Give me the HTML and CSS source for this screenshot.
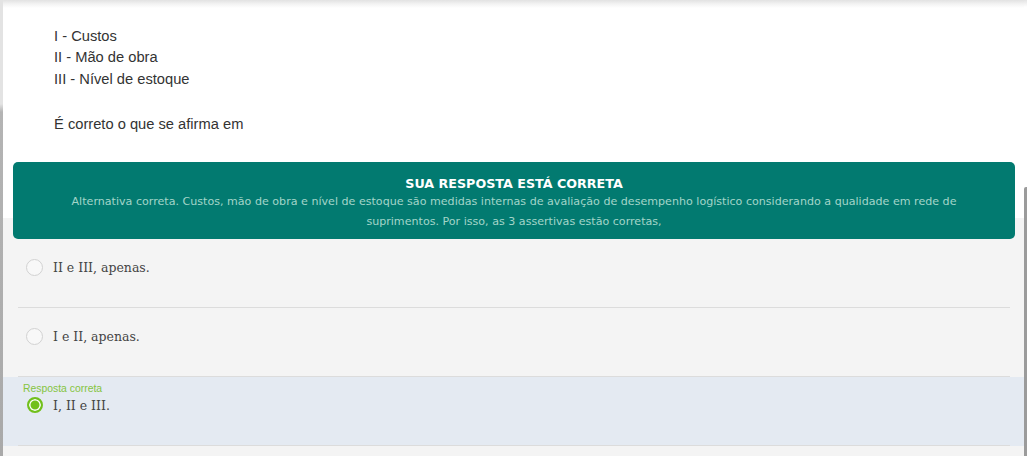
FILE: index.html
```html
<!DOCTYPE html>
<html lang="pt-BR">
<head>
<meta charset="utf-8">
<title>Questão</title>
<link rel="stylesheet" href="styles.css">
</head>
<body>
<div class="frame">
  <div class="edge-left"></div>
  <main class="content">
    <div class="top-shade"></div>
    <section class="question">
      <p>I - Custos<br>II - Mão de obra<br>III - Nível de estoque</p>
      <p class="ask">É correto o que se afirma em</p>
    </section>
    <div class="feedback">
      <h2 class="feedback-title">SUA RESPOSTA ESTÁ CORRETA</h2>
      <p class="feedback-text">Alternativa correta. Custos, mão de obra e nível de estoque são medidas internas de avaliação de desempenho logístico considerando a qualidade em rede de suprimentos. Por isso, as 3 assertivas estão corretas,</p>
    </div>
    <ul class="options">
      <li class="option">
        <div class="option-inner">
          <div class="option-label"></div>
          <div class="choice"><span class="radio"></span><span class="choice-text">II e III, apenas.</span></div>
        </div>
      </li>
      <li class="option">
        <div class="option-inner">
          <div class="option-label"></div>
          <div class="choice"><span class="radio"></span><span class="choice-text">I e II, apenas.</span></div>
        </div>
      </li>
      <li class="option option-correct">
        <div class="option-inner">
          <div class="option-label">Resposta correta</div>
          <div class="choice"><span class="radio radio-on"></span><span class="choice-text">I, II e III.</span></div>
        </div>
      </li>
    </ul>
  </main>
  <div class="edge-right"><div class="scroll-edge"></div></div>
</div>
</body>
</html>
```

FILE: styles.css
```css
* { box-sizing: border-box; }
html, body { margin: 0; padding: 0; }
body {
  background: #f4f4f4;
  font-family: "Liberation Sans", Arial, sans-serif;
  width: 1027px;
  height: 456px;
  overflow: hidden;
}
.frame {
  display: flex;
  height: 456px;
}
.edge-left {
  width: 3px;
  flex: none;
  background: linear-gradient(#e3e3e3 0, #e3e3e3 104px, #b4b4b4 112px, #a9a9a9 100%);
}
.content {
  flex: 1;
  min-width: 0;
  background: linear-gradient(#ffffff 0, #ffffff 218px, #f4f4f4 218px);
}
.edge-right {
  width: 3px;
  flex: none;
  background: linear-gradient(#e4e4e4 0, #ffffff 7px, #ffffff 100%);
}
.scroll-edge {
  margin-top: 187px;
  height: 269px;
  background: #9b9b9b;
  border-radius: 2px 0 0 0;
}
.top-shade {
  height: 8px;
  background: linear-gradient(#e2e2e2, #f3f3f3 4px, #ffffff);
}
.question {
  padding: 17.5px 0 0 51px;
  color: #333;
  font-size: 14.7px;
  line-height: 21.6px;
}
.question p { margin: 0; }
.question .ask { margin-top: 23.5px; }

.feedback {
  margin: 26.5px 9px 0 10px;
  height: 77px;
  background: #027a70;
  border-radius: 5px;
  padding: 14px 30px 7px;
  text-align: center;
}
.feedback-title {
  margin: 0;
  font-family: "DejaVu Sans", Verdana, sans-serif;
  font-weight: bold;
  font-size: 12.7px;
  line-height: 16px;
  color: #ffffff;
}
.feedback-text {
  margin: 0;
  font-family: "DejaVu Sans", Verdana, sans-serif;
  font-size: 11.1px;
  line-height: 20px;
  color: #a2d5c9;
}

.options {
  list-style: none;
  margin: 0;
  padding: 0;
}
.option-correct { background: #e4eaf2; }
.option-inner {
  margin: 0 14px 0 15px;
  padding: 5px 0 31px 0;
  border-bottom: 1px solid #dcdcdc;
}
.option-label {
  height: 14px;
  padding-left: 5px;
  font-family: "Liberation Sans", Arial, sans-serif;
  font-size: 10.4px;
  line-height: 14px;
  color: #84c441;
}
.choice {
  margin-top: 1px;
  height: 17px;
  display: flex;
  align-items: center;
}
.radio {
  width: 17px;
  height: 17px;
  margin-left: 8px;
  border-radius: 50%;
  border: 1px solid #d2d2d2;
  background: #f8f8f8;
  flex: none;
}
.radio-on {
  border: 2px solid #72c01c;
  background: #72c01c;
  box-shadow: inset 0 0 0 1.5px #ffffff;
  width: 16px;
  height: 16px;
  margin-left: 8.5px;
  margin-right: 0.5px;
}
.choice-text {
  margin-left: 10px;
  font-family: "DejaVu Serif", Georgia, serif;
  font-size: 12.5px;
  color: #444;
}
```
